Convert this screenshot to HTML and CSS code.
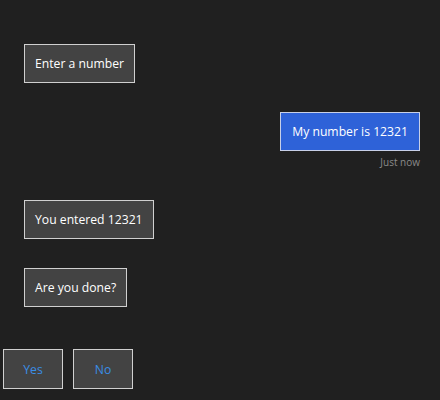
FILE: index.html
```html
<!DOCTYPE html>
<html>
<head>
<meta charset="utf-8">
<link rel="stylesheet" href="styles.css">
</head>
<body>
<div class="chat">
  <div class="row bot first"><div class="bubble">Enter a number</div></div>
  <div class="row user">
    <div class="bubble blue">My number is 12321</div>
    <div class="time">Just now</div>
  </div>
  <div class="row bot third"><div class="bubble">You entered 12321</div></div>
  <div class="row bot fourth"><div class="bubble">Are you done?</div></div>
  <div class="actions">
    <button class="action">Yes</button>
    <button class="action">No</button>
  </div>
</div>
</body>
</html>
```
FILE: styles.css
```css
html, body {
  margin: 0;
  padding: 0;
  background: #202020;
  height: 100%;
  overflow: hidden;
}
body {
  font-family: "Segoe UI", "Open Sans", "Noto Sans", sans-serif;
  color: #fff;
}
.chat {
  display: flex;
  flex-direction: column;
  padding: 44px 20px 0 24px;
}
.row {
  display: flex;
  flex-direction: column;
}
.bot { align-items: flex-start; }
.user { align-items: flex-end; margin-top: 29px; }
.third { margin-top: 31px; }
.fourth { margin-top: 29px; }
.bubble {
  box-sizing: border-box;
  height: 39px;
  line-height: 37px;
  padding: 0 10px;
  border: 1px solid #d0d0d0;
  background: #434343;
  font-size: 12.2px;
  white-space: nowrap;
}
.blue {
  background: #2e62d8;
  border-color: #c8d0e8;
  padding: 0 11px;
}
.time {
  font-size: 10px;
  color: #8a8a8a;
  margin-top: 5px;
  line-height: 13px;
}
.actions {
  display: flex;
  gap: 10px;
  margin: 42px 0 0 -21px;
}
.action {
  box-sizing: border-box;
  width: 60px;
  height: 40px;
  background: #434343;
  border: 1px solid #d0d0d0;
  color: #3a8ee6;
  font-family: inherit;
  font-size: 12.2px;
  padding: 0;
  margin: 0;
}
```
